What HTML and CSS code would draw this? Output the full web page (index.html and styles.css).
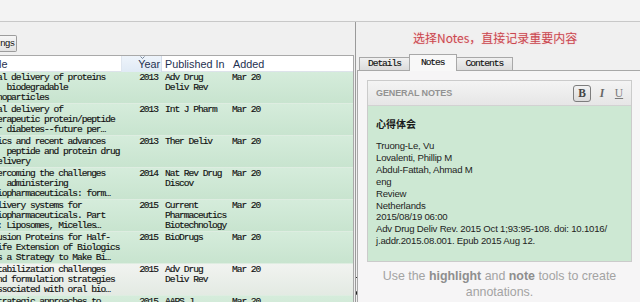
FILE: index.html
```html
<!DOCTYPE html>
<html>
<head>
<meta charset="utf-8">
<link rel="stylesheet" href="styles.css">
</head>
<body>
<div class="topbar"></div>
<div class="main">
  <div class="left">
    <div class="toolbar"><span class="btn">ngs</span></div>
    <div class="table">
      <div class="thead">
        <div class="th th-title">le</div>
        <div class="th th-year"><svg class="caret" width="5" height="3" viewBox="0 0 5 3"><path d="M0.5 0.5 L2.5 2.5 L4.5 0.5" fill="none" stroke="#6a7a90" stroke-width="0.9"/></svg>Year</div>
        <div class="th th-pub">Published In</div>
        <div class="th th-added">Added</div>
      </div>
      <div class="row">
        <div class="c title">al delivery of proteins
  biodegradable
noparticles</div>
        <div class="c year">2013</div>
        <div class="c pub">Adv Drug
Deliv Rev</div>
        <div class="c added">Mar 20</div>
      </div>
      <div class="row">
        <div class="c title">al delivery of
erapeutic protein/peptide
r diabetes--future per…</div>
        <div class="c year">2013</div>
        <div class="c pub">Int J Pharm</div>
        <div class="c added">Mar 20</div>
      </div>
      <div class="row">
        <div class="c title">ics and recent advances
  peptide and protein drug
elivery</div>
        <div class="c year">2013</div>
        <div class="c pub">Ther Deliv</div>
        <div class="c added">Mar 20</div>
      </div>
      <div class="row">
        <div class="c title">ercoming the challenges
  administering
iopharmaceuticals: form…</div>
        <div class="c year">2014</div>
        <div class="c pub">Nat Rev Drug
Discov</div>
        <div class="c added">Mar 20</div>
      </div>
      <div class="row">
        <div class="c title">livery systems for
iopharmaceuticals. Part
: Liposomes, Micelles…</div>
        <div class="c year">2015</div>
        <div class="c pub">Current
Pharmaceutics
Biotechnology</div>
        <div class="c added">Mar 20</div>
      </div>
      <div class="row">
        <div class="c title">usion Proteins for Half-
ife Extension of Biologics
s a Strategy to Make Bi…</div>
        <div class="c year">2015</div>
        <div class="c pub">BioDrugs</div>
        <div class="c added">Mar 20</div>
      </div>
      <div class="row row-light">
        <div class="c title">tabilization challenges
nd formulation strategies
ssociated with oral bio…</div>
        <div class="c year">2015</div>
        <div class="c pub">Adv Drug
Deliv Rev</div>
        <div class="c added">Mar 20</div>
      </div>
      <div class="row">
        <div class="c title">trategic approaches to</div>
        <div class="c year">2015</div>
        <div class="c pub">AAPS J</div>
        <div class="c added">Mar 20</div>
      </div>
    </div>
  </div>
  <div class="splitter"><span class="tick"></span><span class="arrow"></span></div>
  <div class="right">
    <div class="note-red">选择Notes，直接记录重要内容</div>
    <div class="tabs">
      <div class="tab">Details</div>
      <div class="tab active">Notes</div>
      <div class="tab">Contents</div>
    </div>
    <div class="panel">
      <div class="gn">
        <div class="gn-head">
          <span class="gn-title">GENERAL NOTES</span>
          <span class="fmt">
            <span class="fbtn fb">B</span>
            <span class="fbtn fi">I</span>
            <span class="fbtn fu">U</span>
          </span>
        </div>
        <div class="gn-body">
          <div class="gn-h">心得体会</div>
          <div class="gn-text">Truong-Le, Vu
Lovalenti, Phillip M
Abdul-Fattah, Ahmad M
eng
Review
Netherlands
2015/08/19 06:00
Adv Drug Deliv Rev. 2015 Oct 1;93:95-108. doi: 10.1016/
j.addr.2015.08.001. Epub 2015 Aug 12.</div>
        </div>
      </div>
      <div class="hint">Use the <b>highlight</b> and <b>note</b> tools to create annotations.</div>
    </div>
  </div>
</div>
</body>
</html>
```
FILE: styles.css
```css
html, body {
  margin: 0;
  padding: 0;
}
body {
  width: 640px;
  height: 302px;
  overflow: hidden;
  background: #f0f0f0;
  font-family: "Liberation Sans", Arial, sans-serif;
}
.topbar {
  height: 21px;
  background: #f3f3f3;
  border-bottom: 1px solid #c8c8c8;
}
.main {
  display: flex;
  height: 280px;
}
.left {
  width: 354px;
  flex: none;
  display: flex;
  flex-direction: column;
}
.toolbar {
  height: 33px;
  box-sizing: border-box;
  padding-top: 10px;
}
.btn {
  display: inline-block;
  height: 15px;
  line-height: 15px;
  padding: 0 2px 0 0;
  border: 1px solid #9c9c9c;
  border-left: none;
  border-radius: 0 2px 2px 0;
  background: linear-gradient(#f6f6f6, #e2e2e2);
  font-family: "Liberation Mono", monospace;
  font-size: 9.5px;
  letter-spacing: -1px;
  color: #111;
}
.table {
  flex: 1;
  border-top: 1px solid #a9a9a9;
  border-right: 1px solid #a8a8a8;
  overflow: hidden;
  background: #d0e9d6;
}
.thead {
  display: grid;
  grid-template-columns: 121px 41px 68px 1fr;
  height: 16px;
  background: #fff;
  border-bottom: 1px solid #dde3ea;
  box-sizing: border-box;
}
.th {
  font-size: 10.8px;
  line-height: 16px;
  color: #1e3150;
  white-space: nowrap;
}
.th-title {
  margin-left: -1px;
  overflow: hidden;
}
.th-year {
  position: relative;
  background: linear-gradient(#eef4fb, #e0eaf5);
  border-left: 1px solid #dfe6ef;
  border-right: 1px solid #d3dcea;
  text-align: right;
  padding-right: 1px;
}
.caret {
  position: absolute;
  left: 18px;
  top: 0;
}
.th-pub {
  padding-left: 3px;
}
.th-added {
  padding-left: 3px;
}
.row {
  display: grid;
  grid-template-columns: 121px 41px 68px 1fr;
  height: 32px;
  box-sizing: border-box;
  padding-top: 1px;
  background: linear-gradient(#d5ecdb, #c8e4cf);
  border-bottom: 1px solid #deede1;
}
.row-light {
  background: linear-gradient(#f1f3f0, #e3eae3);
}
.c {
  font-family: "Liberation Mono", monospace;
  font-size: 9.6px;
  letter-spacing: -1.05px;
  line-height: 10px;
  color: #111;
  -webkit-text-stroke: 0.15px #111;
  white-space: pre;
  overflow: hidden;
}
.title {
  margin-left: -3px;
}
.year {
  text-align: right;
  padding-right: 4px;
}
.pub {
  padding-left: 3px;
}
.added {
  padding-left: 2px;
}
.splitter {
  width: 4px;
  flex: none;
  display: flex;
  flex-direction: column;
  justify-content: flex-end;
  align-items: flex-start;
  padding-bottom: 7px;
  box-sizing: border-box;
  border-left: 1px solid #9a9a9a;
  margin-left: 1px;
}
.tick {
  width: 3px;
  height: 1px;
  background: #333;
  margin-bottom: 13px;
}
.arrow {
  width: 0;
  height: 0;
  border-left: 3px solid #222;
  border-top: 2px solid transparent;
  border-bottom: 2px solid transparent;
}
.right {
  flex: 1;
  display: flex;
  flex-direction: column;
  margin-left: -2px;
}
.note-red {
  height: 33px;
  box-sizing: border-box;
  padding: 8px 0 0 56px;
  line-height: 16px;
  font-family: "Noto Sans CJK SC", "Liberation Sans", sans-serif;
  font-size: 12px;
  color: #c9474f;
  text-shadow: 0 0 2px #f7c9cc;
  white-space: nowrap;
}
.tabs {
  display: flex;
  align-items: flex-end;
  height: 15px;
  padding-left: 2px;
  position: relative;
  z-index: 1;
}
.tab {
  height: 13px;
  line-height: 12px;
  box-sizing: border-box;
  padding: 0 8px;
  border: 1px solid #a8a8a8;
  border-bottom: none;
  background: linear-gradient(#f0f0f0, #dcdcdc);
  font-family: "Liberation Mono", monospace;
  font-size: 9.6px;
  letter-spacing: -1.05px;
  color: #111;
  -webkit-text-stroke: 0.15px #111;
}
.tab + .tab {
  margin-left: -1px;
}
.tab:last-child {
  padding: 0 9px;
}
.tab.active {
  height: 17px;
  line-height: 15px;
  margin-bottom: -1px;
  background: #f8f8f8;
  padding: 0 11px;
}
.panel {
  flex: 1;
  border-top: 1px solid #a8a8a8;
  border-left: 1px solid #a8a8a8;
  background: #f6f5f6;
  padding: 9px 0 0 9px;
}
.gn {
  width: 265px;
  border: 1px solid #cbcbcb;
  box-sizing: border-box;
}
.gn-head {
  height: 24px;
  display: flex;
  align-items: center;
  justify-content: space-between;
  padding: 0 6px 0 8px;
  background: linear-gradient(#f4f4f4, #e6e6e6);
  border-bottom: 1px solid #d2d2d2;
}
.gn-title {
  font-size: 9px;
  font-weight: bold;
  color: #929292;
  letter-spacing: -0.1px;
}
.fmt {
  display: flex;
  gap: 5px;
  align-items: center;
}
.fbtn {
  width: 12px;
  height: 16px;
  line-height: 16px;
  text-align: center;
  font-family: "Liberation Serif", serif;
  font-size: 11.5px;
  color: #666;
}
.fb {
  width: 16px;
  height: 15px;
  line-height: 15px;
  border: 1px solid #7d7d7d;
  border-radius: 3px;
  background: linear-gradient(#f2f2f2, #dcdcdc);
  font-weight: bold;
  color: #444;
}
.fi {
  font-style: italic;
  font-weight: bold;
}
.fu {
  text-decoration: underline;
  color: #7a7a7a;
}
.gn-body {
  height: 155px;
  background: #cde8d3;
  padding: 12px 0 0 8px;
  box-sizing: border-box;
}
.gn-h {
  font-family: "Noto Sans CJK SC", sans-serif;
  font-size: 10px;
  font-weight: bold;
  line-height: 12px;
  color: #1a1a1a;
  margin-bottom: 10px;
}
.gn-text {
  font-size: 9.6px;
  line-height: 11.9px;
  color: #1e1e1e;
  white-space: pre;
  letter-spacing: -0.2px;
}
.hint {
  width: 265px;
  text-align: center;
  margin-top: 6px;
  font-size: 12.4px;
  line-height: 16px;
  color: #a3a3a3;
}
.hint b {
  color: #8e8e8e;
}
```
